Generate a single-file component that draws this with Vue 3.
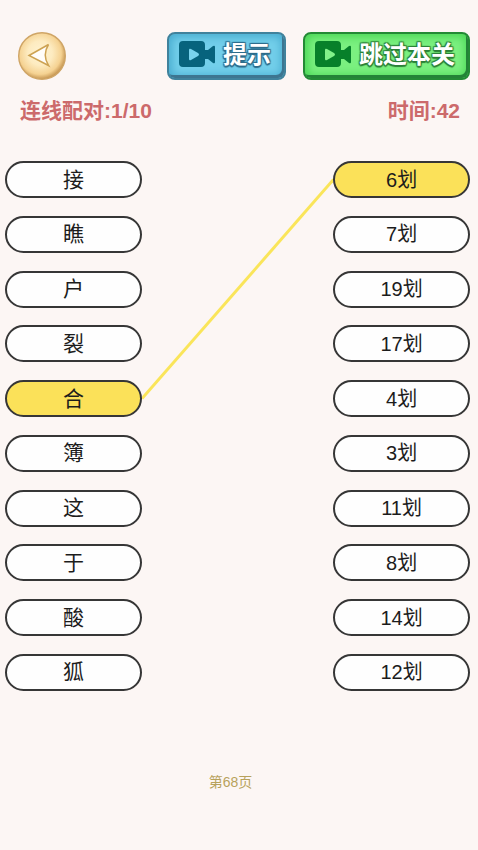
<script setup>
import { computed, ref } from 'vue'

const words = ['接', '瞧', '户', '裂', '合', '簿', '这', '于', '酸', '狐']
const strokes = ['6划', '7划', '19划', '17划', '4划', '3划', '11划', '8划', '14划', '12划']

const pickedWord = ref(4)
const pickedStroke = ref(0)

const boardHeight = 530
const pillHeight = 37
const centerOf = (i) => pillHeight / 2 + (i * (boardHeight - pillHeight)) / (words.length - 1)
const link = computed(() => ({ from: centerOf(pickedWord.value), to: centerOf(pickedStroke.value) }))
</script>

<template>
  <main class="game">
    <header class="toolbar">
      <button class="back" type="button" aria-label="返回">
        <svg viewBox="0 0 48 48" aria-hidden="true">
          <defs>
            <radialGradient id="coin" cx="0.46" cy="0.44" r="0.58">
              <stop offset="0" stop-color="#fff3d2" />
              <stop offset="0.45" stop-color="#fdebc0" />
              <stop offset="0.78" stop-color="#f5d292" />
              <stop offset="1" stop-color="#bd8a45" />
            </radialGradient>
          </defs>
          <circle cx="24" cy="24" r="23.3" fill="url(#coin)" stroke="#cfa566" stroke-width="1.4" />
          <path d="M11 23.500 L30.500 12.500 Q24 23 30.500 33.500 Z" fill="#fffdfa" stroke="#cda252" stroke-width="1.5" />
        </svg>
      </button>
      <div class="actions">
        <button class="action hint" type="button">
          <svg class="camera" viewBox="0 0 36 27" aria-hidden="true">
            <path fill="currentColor" d="M4 0H22Q26 0 26 4V9H29L34 5Q36 4 36 6V21Q36 23 34 22L29 18H26V22Q26 26 22 26H4Q0 26 0 22V4Q0 0 4 0Z" />
            <path class="play" d="M10 9Q10 7 12 8L19 12Q21 13.500 19 15L12 19Q10 20 10 18Z" />
          </svg>
          <span>提示</span>
        </button>
        <button class="action skip" type="button">
          <svg class="camera" viewBox="0 0 36 27" aria-hidden="true">
            <path fill="currentColor" d="M4 0H22Q26 0 26 4V9H29L34 5Q36 4 36 6V21Q36 23 34 22L29 18H26V22Q26 26 22 26H4Q0 26 0 22V4Q0 0 4 0Z" />
            <path class="play" d="M10 9Q10 7 12 8L19 12Q21 13.500 19 15L12 19Q10 20 10 18Z" />
          </svg>
          <span>跳过本关</span>
        </button>
      </div>
    </header>

    <div class="status">
      <span>连线配对:1/10</span>
      <span>时间:42</span>
    </div>

    <section class="board">
      <div class="column">
        <button
          v-for="(word, i) in words"
          :key="word"
          class="pill"
          :class="{ picked: i === pickedWord }"
          type="button"
          @click="pickedWord = i"
        >{{ word }}</button>
      </div>
      <svg class="links" :viewBox="`0 0 100 ${boardHeight}`" preserveAspectRatio="none" aria-hidden="true">
        <line x1="0" :y1="link.from" x2="100" :y2="link.to" />
      </svg>
      <div class="column counts">
        <button
          v-for="(stroke, i) in strokes"
          :key="stroke"
          class="pill"
          :class="{ picked: i === pickedStroke }"
          type="button"
          @click="pickedStroke = i"
        >{{ stroke }}</button>
      </div>
    </section>

    <footer class="page">第68页</footer>
  </main>
</template>

<style>
body {
  background: #fcf6f4;
}
</style>

<style scoped>
.game {
  box-sizing: border-box;
  min-height: 100vh;
  padding: 32px 8px 48px 5px;
  background: #fcf6f4;
  font-family: "Liberation Sans", "Noto Sans CJK SC", sans-serif;
}

button {
  margin: 0;
  padding: 0;
  border: 0;
  background: none;
  font-family: inherit;
  cursor: pointer;
}

.toolbar {
  display: flex;
  align-items: center;
  justify-content: space-between;
  padding-left: 13px;
}

.back {
  width: 48px;
  height: 48px;
}

.back svg {
  display: block;
  width: 100%;
  height: 100%;
}

.actions {
  display: flex;
  gap: 17px;
}

.action {
  display: flex;
  align-items: center;
  box-sizing: border-box;
  height: 48px;
  padding: 0 13px 3px 10px;
  gap: 8px;
  border: 2px solid;
  border-radius: 8px;
  color: #fff;
  font-size: 24px;
  font-weight: 700;
  line-height: 32px;
  white-space: nowrap;
}

.hint {
  border-color: #40829c;
  background: #73cfea;
  box-shadow: inset -2px -3px 0 #3d7590, inset 0 0 8px 3px #48acd0;
}

.skip {
  border-color: #238a35;
  background: #7bf080;
  box-shadow: inset -2px -3px 0 #238337, inset 0 0 8px 3px #49d655;
}

.hint span {
  text-shadow: 1px 1px 1px #2d6d8c, -1px -1px 1px #2d6d8c, 1px -1px 1px #2d6d8c, -1px 1px 1px #2d6d8c, 0 2px 1px #2d6d8c;
}

.skip span {
  text-shadow: 1px 1px 1px #2b8038, -1px -1px 1px #2b8038, 1px -1px 1px #2b8038, -1px 1px 1px #2b8038, 0 2px 1px #2b8038;
}

.camera {
  width: 36px;
  height: 27px;
}

.hint .camera {
  color: #07637d;
}

.skip .camera {
  color: #07802a;
}

.hint .play {
  fill: #79d3ed;
}

.skip .play {
  fill: #82f18a;
}

.status {
  display: flex;
  justify-content: space-between;
  padding: 16px 10px 0 15px;
  color: #cc6a6b;
  font-size: 21px;
  font-weight: 700;
  line-height: 30px;
}

.board {
  display: grid;
  grid-template-columns: 5fr 7fr 5fr;
  height: 530px;
  margin-top: 35px;
}

.column {
  display: flex;
  flex-direction: column;
  justify-content: space-between;
  font-size: 21px;
}

.counts {
  font-size: 20px;
}

.pill {
  box-sizing: border-box;
  height: 37px;
  border: 2px solid #363636;
  border-radius: 19px;
  background: #fefefe;
  color: #1c1c1c;
  font-size: inherit;
  line-height: 32px;
}

.picked {
  background: #fbe159;
}

.links {
  width: 100%;
  height: 100%;
}

.links line {
  stroke: #fae55a;
  stroke-width: 3px;
  vector-effect: non-scaling-stroke;
}

.page {
  margin-top: 81px;
  padding-right: 14px;
  color: #b8a25c;
  font-size: 14px;
  line-height: 20px;
  text-align: center;
}
</style>
